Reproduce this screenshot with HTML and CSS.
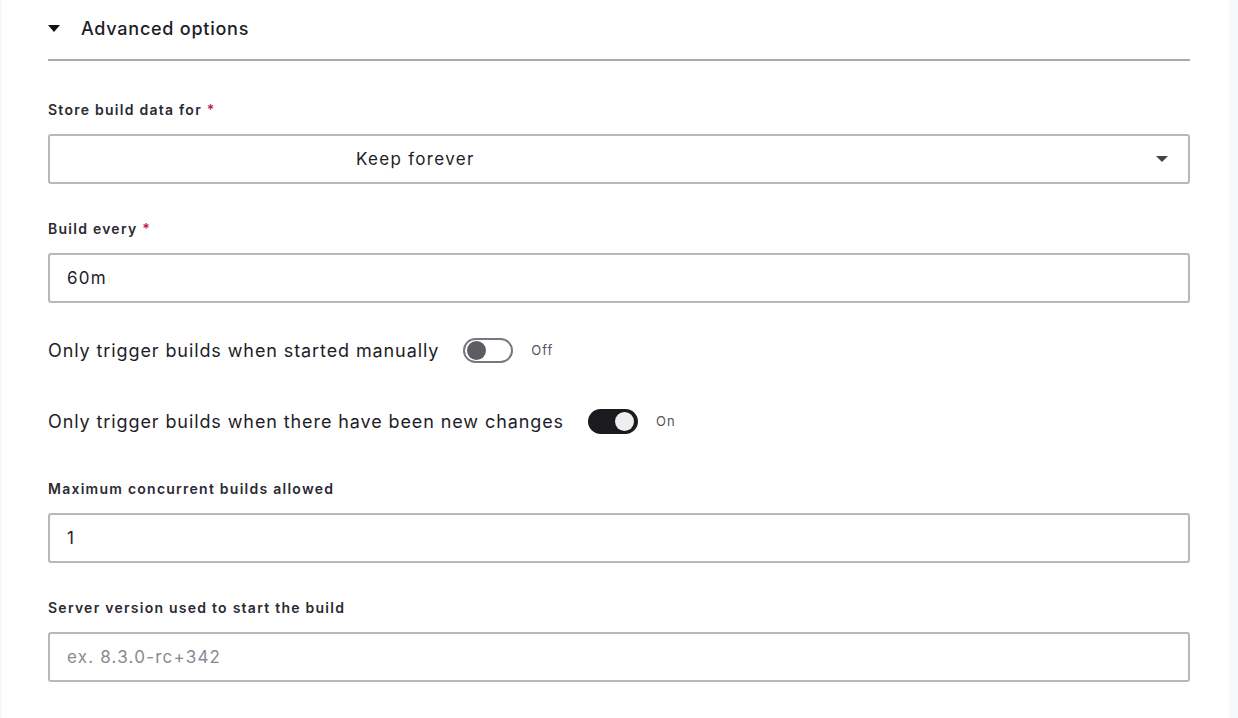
FILE: index.html
```html
<!DOCTYPE html>
<html lang="en">
<head>
    <meta charset="UTF-8">
    <meta name="viewport" content="width=device-width, initial-scale=1.0">
    <title>Advanced options</title>
    <link rel="stylesheet" href="styles.css">
</head>
<body>
    <div class="page">
        <div class="panel">
            <div class="section-head">
                <span class="caret"></span>
                <span class="section-title">Advanced options</span>
            </div>

            <div class="field">
                <label class="field-label">Store build data for <span class="req">*</span></label>
                <div class="select">
                    <span class="select-value">Keep forever</span>
                    <span class="select-caret"></span>
                </div>
            </div>

            <div class="field">
                <label class="field-label">Build every <span class="req">*</span></label>
                <input class="text-input" type="text" value="60m">
            </div>

            <div class="toggle-row first">
                <span class="toggle-label">Only trigger builds when started manually</span>
                <span class="toggle"><span class="knob"></span></span>
                <span class="toggle-state">Off</span>
            </div>

            <div class="toggle-row">
                <span class="toggle-label">Only trigger builds when there have been new changes</span>
                <span class="toggle on"><span class="knob"></span></span>
                <span class="toggle-state">On</span>
            </div>

            <div class="field">
                <label class="field-label">Maximum concurrent builds allowed</label>
                <input class="text-input" type="text" value="1">
            </div>

            <div class="field">
                <label class="field-label">Server version used to start the build</label>
                <input class="text-input" type="text" placeholder="ex. 8.3.0-rc+342">
            </div>
        </div>
    </div>
</body>
</html>
```

FILE: styles.css
```css
body {
    margin: 0;
    background: #f7f8f9;
    font-family: Inter, "Noto Sans", sans-serif;
    color: #1d1d27;
}
.page {
    margin: 0 9px 0 2px;
    background: #fff;
    min-height: 718px;
}
.panel {
    padding: 0 39px 0 46px;
}
.section-head {
    display: flex;
    align-items: center;
    height: 61px;
    border-bottom: 2px solid #a9a9ab;
    padding-bottom: 2px;
    box-sizing: border-box;
}
.caret {
    width: 0;
    height: 0;
    border-left: 6px solid transparent;
    border-right: 6px solid transparent;
    border-top: 7px solid #111;
    margin-right: 21px;
}
.section-title {
    font-size: 18px;
    font-weight: 500;
    letter-spacing: 0.75px;
}
.field {
    margin-top: 36px;
}
.section-head + .field {
    margin-top: 40px;
}
.toggle-row + .field {
    margin-top: 46px;
}
.field-label {
    display: block;
    font-size: 14px;
    line-height: 17px;
    font-weight: 600;
    letter-spacing: 1.25px;
    color: #2a2a33;
    margin-bottom: 16px;
}
.req {
    color: #c2185b;
}
.select {
    display: flex;
    align-items: center;
    height: 50px;
    border: 2px solid #b8b8ba;
    border-radius: 3px;
    box-sizing: border-box;
}
.select-value {
    font-size: 17px;
    letter-spacing: 1.3px;
    margin-left: 306px;
}
.select-caret {
    margin-left: auto;
    margin-right: 20px;
    width: 0;
    height: 0;
    border-left: 6px solid transparent;
    border-right: 6px solid transparent;
    border-top: 6px solid #444;
}
.text-input {
    display: block;
    width: 100%;
    height: 50px;
    box-sizing: border-box;
    border: 2px solid #b8b8ba;
    border-radius: 3px;
    padding: 0 17px;
    font-family: Inter, "Noto Sans", sans-serif;
    font-size: 17px;
    letter-spacing: 1.2px;
    color: #1d1d27;
    outline: none;
}
.text-input::placeholder {
    color: #8a8a92;
}
.toggle-row {
    display: flex;
    align-items: center;
    height: 26px;
    margin-top: 45px;
}
.toggle-row.first {
    margin-top: 34px;
}
.toggle-label {
    font-size: 18px;
    letter-spacing: 0.9px;
}
.toggle {
    display: flex;
    align-items: center;
    width: 50px;
    height: 25px;
    box-sizing: border-box;
    border: 2px solid #77777d;
    border-radius: 13px;
    margin-left: 24px;
    padding: 0 2px;
}
.knob {
    width: 19px;
    height: 19px;
    border-radius: 50%;
    background: #5c5c62;
}
.toggle.on {
    background: #1b1b1f;
    border-color: #1b1b1f;
    justify-content: flex-end;
}
.toggle.on .knob {
    background: #eeeeee;
}
.toggle-state {
    font-size: 13px;
    letter-spacing: 1px;
    color: #55555c;
    margin-left: 18px;
    margin-top: -1px;
}
```
